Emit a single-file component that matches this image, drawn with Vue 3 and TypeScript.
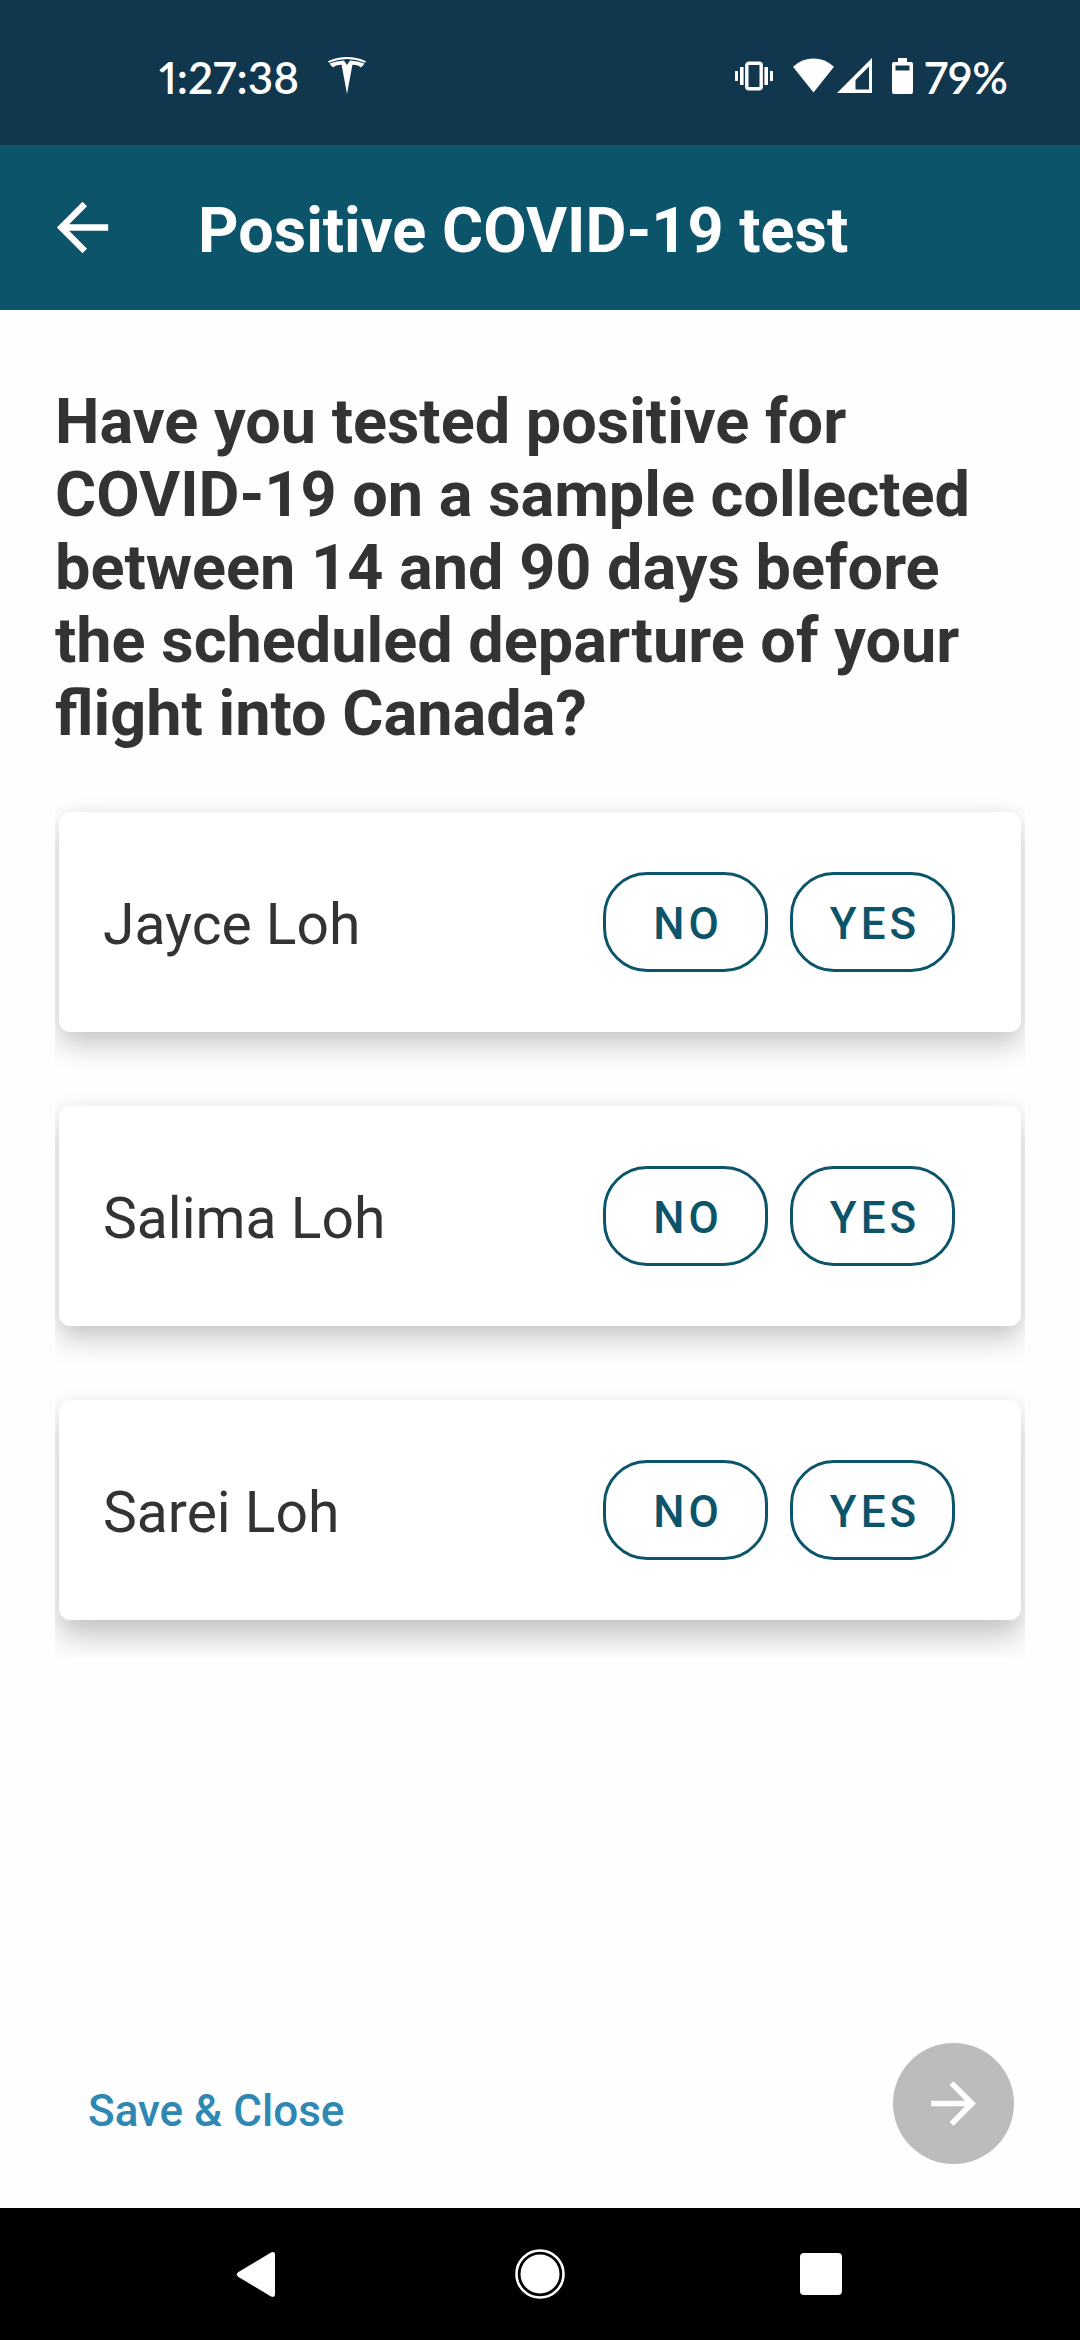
<script setup lang="ts">
import { reactive } from 'vue'

type Answer = 'NO' | 'YES'

interface Traveller {
  name: string
  answer: Answer | null
}

const choices: Answer[] = ['NO', 'YES']

const travellers = reactive<Traveller[]>([
  { name: 'Jayce Loh', answer: null },
  { name: 'Salima Loh', answer: null },
  { name: 'Sarei Loh', answer: null },
])
</script>

<template>
  <div class="screen">
    <div class="status-bar">
      <div class="status-group">
        <span class="status-text">1:27:38</span>
        <svg class="tesla" width="38" height="37" viewBox="0 0 38 37" aria-hidden="true">
          <path d="M0 4.200Q19 -4 38 4.200L37.200 5.800Q19 -1.600 0.800 5.800Z" />
          <path d="M1.600 6.600Q8 3.600 16 3.400L19 8L22 3.400Q30 3.600 36.400 6.600Q35 9.600 32.400 10.400Q31 7.800 24.400 7.800L19 37L13.600 7.800Q7 7.800 5.600 10.400Q3 9.600 1.600 6.600Z" />
        </svg>
      </div>
      <div class="status-group">
        <svg class="vibrate" width="38" height="30" viewBox="0 0 38 30" aria-hidden="true">
          <rect x="11.800" y="2.300" width="14.400" height="25.400" rx="2" fill="none" stroke="currentColor" stroke-width="3.400" />
          <path d="M0 10h3v10H0zM5 6h3.600v18H5zM29.400 6H33v18h-3.600zM35 10h3v10h-3z" />
        </svg>
        <svg class="wifi" width="41" height="35" viewBox="0 0 41 35" aria-hidden="true">
          <path d="M0 8.800Q9 0.500 20.500 0.500T41 8.800L20.500 34.500Z" />
        </svg>
        <svg class="signal" width="35" height="35" viewBox="0 0 35 35" aria-hidden="true">
          <path fill-rule="evenodd" d="M35 0V35H0ZM32 8.500L18.500 22V31.600H32Z" />
        </svg>
        <svg class="battery" width="21" height="36" viewBox="0 0 21 36" aria-hidden="true">
          <path fill-rule="evenodd" d="M6 0H15V4H19Q21 4 21 6V34Q21 36 19 36H2Q0 36 0 34V6Q0 4 2 4H6ZM3.500 7.500V12.500H17.500V7.500Z" />
        </svg>
        <span class="status-text">79%</span>
      </div>
    </div>

    <header class="app-bar">
      <button class="back" type="button" aria-label="Back">
        <svg width="77" height="77" viewBox="0 0 24 24" aria-hidden="true">
          <path d="M20 11H7.830l5.590-5.590L12 4l-8 8 8 8 1.410-1.410L7.830 13H20v-2z" />
        </svg>
      </button>
      <h1 class="title">Positive COVID-19 test</h1>
    </header>

    <main class="content">
      <h2 class="question">
        Have you tested positive for COVID-19 on a sample collected between 14 and 90 days before the
        scheduled departure of your flight into Canada?
      </h2>
      <div class="cards">
        <section v-for="person in travellers" :key="person.name" class="card">
          <span class="name">{{ person.name }}</span>
          <div class="choices" role="group" :aria-label="person.name">
            <button
              v-for="choice in choices"
              :key="choice"
              class="choice"
              :class="{ selected: person.answer === choice }"
              type="button"
              :aria-pressed="person.answer === choice"
              @click="person.answer = choice"
            >
              {{ choice }}
            </button>
          </div>
        </section>
      </div>
    </main>

    <footer class="actions">
      <button class="save" type="button">Save &amp; Close</button>
      <button class="next" type="button" aria-label="Next">
        <svg width="67" height="67" viewBox="0 0 24 24" aria-hidden="true">
          <path d="M12 4l-1.410 1.410L16.170 11H4v2h12.170l-5.580 5.590L12 20l8-8z" />
        </svg>
      </button>
    </footer>

    <nav class="nav-bar" aria-label="System">
      <button class="nav-button" type="button" aria-label="Back">
        <svg width="52" height="52" viewBox="0 0 52 52" aria-hidden="true">
          <path d="M5.500 24L38 4.500Q42 3 42 6.500V46.500Q42 50 38 48.500L5.500 29Q2 26.500 5.500 24Z" />
        </svg>
      </button>
      <button class="nav-button" type="button" aria-label="Home">
        <svg width="52" height="52" viewBox="0 0 52 52" aria-hidden="true">
          <circle cx="26" cy="26" r="23.500" fill="none" stroke="currentColor" stroke-width="2.600" />
          <circle cx="26" cy="26" r="19.500" />
        </svg>
      </button>
      <button class="nav-button" type="button" aria-label="Overview">
        <svg width="52" height="52" viewBox="0 0 52 52" aria-hidden="true">
          <rect x="5" y="5" width="42" height="42" rx="4" />
        </svg>
      </button>
    </nav>
  </div>
</template>

<style>
body {
  background: #fefefe;
}
</style>

<style scoped>
.screen {
  display: flex;
  flex-direction: column;
  min-height: 100vh;
  background: #fefefe;
  color: #333333;
  font-family: Roboto, 'Liberation Sans', sans-serif;
}

button {
  padding: 0;
  border: 0;
  background: none;
  color: inherit;
  font-family: inherit;
  cursor: pointer;
}

svg {
  display: block;
  flex: none;
  fill: currentColor;
}

.status-bar {
  display: flex;
  align-items: center;
  justify-content: space-between;
  box-sizing: border-box;
  min-height: 145px;
  padding: 6px 72px 0 159px;
  background: #10374d;
  color: #ffffff;
}

.status-group {
  display: flex;
  align-items: center;
}

.status-text {
  padding-top: 2px;
  font-family: Lato, Roboto, sans-serif;
  font-size: 44px;
  font-variant-numeric: proportional-nums;
  font-weight: 600;
  line-height: 52px;
}

.tesla {
  margin-left: 29px;
}

.wifi {
  margin-left: 20px;
}

.signal {
  margin-left: 3px;
}

.battery {
  margin-left: 20px;
  margin-right: 12px;
}

.app-bar {
  display: flex;
  align-items: center;
  box-sizing: border-box;
  min-height: 165px;
  padding: 0 44px;
  background: #0c546a;
  color: #ffffff;
}

.title {
  margin: 6px 0 0 77px;
  font-size: 63px;
  font-weight: 700;
  line-height: 73px;
}

.content {
  flex: 1;
  padding: 75px 55px 0;
}

.question {
  margin: 0;
  font-size: 63px;
  font-weight: 700;
  line-height: 73px;
}

.cards {
  display: flex;
  flex-direction: column;
  gap: 74px;
  margin-top: 25px;
  padding: 37px 4px;
  overflow: hidden;
}

.card {
  display: flex;
  align-items: center;
  justify-content: space-between;
  padding: 60px 66px 60px 44px;
  border-radius: 11px;
  background: #ffffff;
  box-shadow:
    0 14px 28px rgba(0, 0, 0, 0.2),
    0 0 20px rgba(0, 0, 0, 0.05);
}

.card:last-child {
  box-shadow:
    0 18px 30px rgba(0, 0, 0, 0.21),
    0 0 20px rgba(0, 0, 0, 0.05);
}

.name {
  padding-top: 5px;
  font-size: 57px;
  line-height: 68px;
}

.choices {
  display: flex;
  gap: 22px;
}

.choice {
  box-sizing: border-box;
  width: 165px;
  height: 100px;
  padding: 3px 0 0 5px;
  border: 3px solid #0c546a;
  border-radius: 44px;
  color: #0c546a;
  font-size: 44px;
  font-weight: 500;
  letter-spacing: 4px;
}

.choice.selected {
  background: #0c546a;
  color: #ffffff;
}

.actions {
  display: flex;
  align-items: flex-end;
  justify-content: space-between;
  padding: 0 66px 44px 88px;
}

.save {
  min-height: 106px;
  color: #2f88b3;
  font-size: 44px;
  font-weight: 500;
}

.next {
  display: flex;
  align-items: center;
  justify-content: center;
  width: 121px;
  height: 121px;
  border-radius: 50%;
  background: #bcbcbc;
  color: #ffffff;
}

.nav-bar {
  display: flex;
  justify-content: center;
  gap: 229px;
  padding: 40px 0;
  background: #000000;
  color: #ffffff;
}
</style>
